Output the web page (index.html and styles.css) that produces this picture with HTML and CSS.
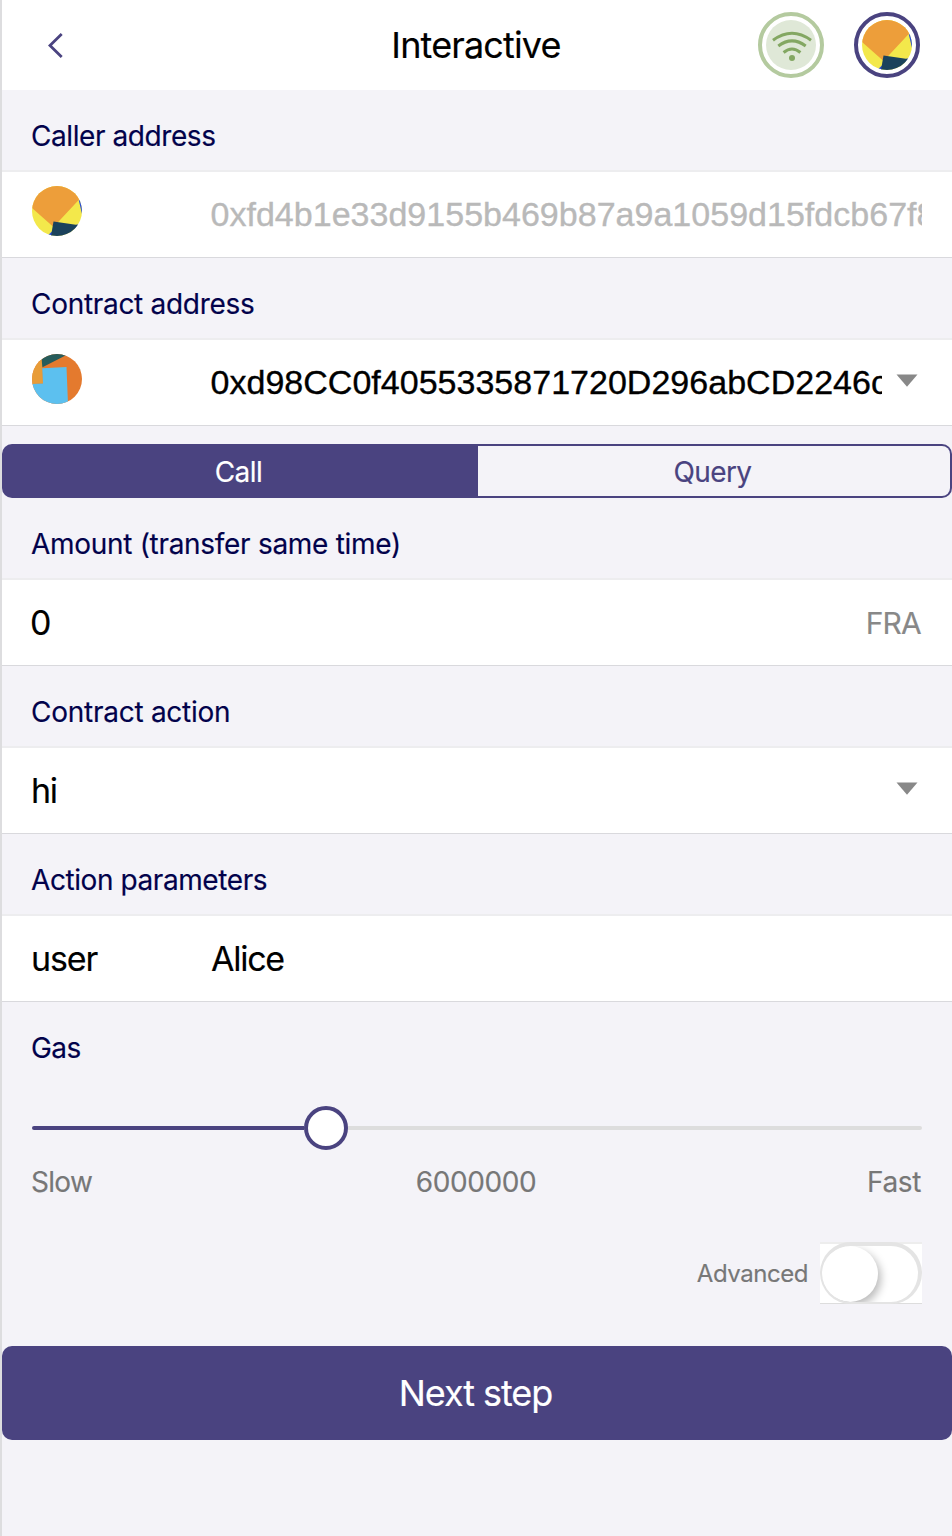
FILE: index.html
```html
<!DOCTYPE html>
<html lang="en">
<head>
<meta charset="utf-8">
<title>Interactive</title>
<link rel="stylesheet" href="styles.css">
</head>
<body>
<svg class="defs" width="0" height="0">
  <symbol id="caller" viewBox="0 0 50 50">
    <path fill="#f3e84b" d="M0 0h50v50H0z"/>
    <path fill="#2b4fd8" d="M46.700 14 50 12v16zM15 50l5-4.500v4.500zM44 38.700l6-1V44l-8 3z"/>
    <path fill="#f3e84b" d="M45.500 39 50 36v2z"/>
    <path fill="#ed9e3a" d="M0 0h50v12l-3.300 2L21.500 41 0 22z"/>
    <path fill="#1b425c" d="m21.500 35.500 24 3.500L40 50H19z"/>
  </symbol>
  <symbol id="contract" viewBox="0 0 50 50">
    <path fill="#e47a2e" d="M0 0h50v50H0z"/>
    <path fill="#275c5b" d="M9 0h25v1.200L10 13.500zM45 8l5 3v8z"/>
    <path fill="#e89c38" d="M0 0h9l1.500 14.500.500 15L0 30z"/>
    <path fill="#5cc0ef" d="m10.200 14.200 24.300-1.100L36 50H0V30l11-.4z"/>
  </symbol>
</svg>
<main class="app">
  <header class="bar">
    <svg class="back" viewBox="0 0 18 28"><path d="M14.700 2 3 13.500l11.700 11.500"/></svg>
    <h1 class="title">Interactive</h1>
    <div class="ring ring-net">
      <svg viewBox="0 0 50 50">
        <circle cx="25" cy="25" r="25" fill="#dfe8d7"/>
        <g fill="none" stroke="#83a762" stroke-width="3">
          <path d="M7 20.200Q26 6.200 45 20.200"/>
          <path d="M12.300 26Q26 15.800 39.700 26"/>
          <path d="M17.600 32.500Q26 25.500 34.400 32.500"/>
        </g>
        <circle cx="26" cy="38" r="3" fill="#83a762"/>
      </svg>
    </div>
    <div class="ring ring-user"><svg class="round"><use href="#caller"/></svg></div>
  </header>

  <h2 class="label l-caller">Caller address</h2>
  <div class="row">
    <div class="icon"><svg class="round"><use href="#caller"/></svg></div>
    <div class="address muted">0xfd4b1e33d9155b469b87a9a1059d15fdcb67f8</div>
  </div>
  <h2 class="label">Contract address</h2>
  <div class="row">
    <div class="icon"><svg class="round"><use href="#contract"/></svg></div>
    <div class="address picked">0xd98CC0f4055335871720D296abCD2246c</div>
    <svg class="caret" viewBox="0 0 22 13"><path d="M.5.500h21L11 12.700z"/></svg>
  </div>

  <div class="tabs">
    <div class="tab active">Call</div>
    <div class="tab query">Query</div>
  </div>

  <h2 class="label">Amount (transfer same time)</h2>
  <div class="row">
    <div class="value zero">0</div>
    <div class="unit">FRA</div>
  </div>
  <h2 class="label l-action">Contract action</h2>
  <div class="row">
    <div class="value">hi</div>
    <svg class="caret" viewBox="0 0 22 13"><path d="M.5.500h21L11 12.700z"/></svg>
  </div>
  <h2 class="label l-params">Action parameters</h2>
  <div class="row">
    <div class="key">user</div>
    <div class="value">Alice</div>
  </div>

  <h2 class="label l-gas">Gas</h2>
  <div class="slider">
    <div class="fill"></div>
    <div class="thumb"></div>
    <div class="track"></div>
  </div>
  <div class="scale">
    <span class="slow">Slow</span><span class="gas">6000000</span><span class="fast">Fast</span>
  </div>
  <div class="advanced">
    <span class="adv-text">Advanced</span>
    <div class="switch"><div class="pill"><div class="knob"></div></div></div>
  </div>
  <div class="next"><span>Next step</span></div>
</main>
</body>
</html>
```
FILE: styles.css
```css
* { box-sizing: border-box; }
body { margin: 0; background: #f4f3f8; font-family: Inter, sans-serif; color: #000; -webkit-text-stroke: 0.15px currentColor; }
.defs { display: block; }
.app { width: 952px; height: 1536px; border-left: 2px solid #dddddf; overflow: hidden; }
svg { display: block; flex: none; }

.bar { display: grid; grid-template-columns: 303px 1fr 305px; height: 90px; background: #fff; align-items: center; position: relative; }
.back { width: 18px; height: 28px; margin-left: 45px; fill: none; stroke: #4a4380; stroke-width: 2.8; }
.title { margin: 0; font-size: 36px; font-weight: 400; line-height: 91px; text-align: center; white-space: nowrap; letter-spacing: -0.85px; }
.ring { position: absolute; top: 12px; width: 66px; height: 66px; padding: 4px; border: 4px solid; border-radius: 50%; }
.ring svg { width: 50px; height: 50px; }
.ring-net { left: 756px; border-color: #b4ca9f; }
.ring-user { left: 852px; border-color: #4a4380; }
.round { width: 50px; height: 50px; border-radius: 50%; }

.label { margin: 0; height: 80px; padding: 12px 0 0 29px; line-height: 69px; font-size: 28px; font-weight: 400; color: #02024b; white-space: nowrap; letter-spacing: -0.3px; }
.l-caller, .l-params { letter-spacing: -0.42px; }
.l-action { letter-spacing: -0.26px; }
.l-gas { letter-spacing: -0.6px; }
.row { display: flex; align-items: center; height: 88px; padding: 0 30px 0 29px; background: #fff; border-top: 2px solid #ededef; border-bottom: 1px solid #d9d9dd; }
.icon { width: 179.500px; padding: 0 0 7px 1px; flex: none; }
.address { flex: 1; min-width: 0; overflow: hidden; white-space: nowrap; font: 34px/84px "Liberation Sans", Arial, sans-serif; height: 85px; letter-spacing: 0.02px; -webkit-text-stroke-width: 0.35px; }
.muted { color: #b9b9b9; }
.picked { margin-right: 14px; }
.caret { width: 22px; height: 13px; margin: 0 4px 4px 0; fill: #888; }
.value { flex: 1; font-size: 34px; letter-spacing: -1.25px; }
.zero { margin-left: -1px; }
.key { width: 180px; font-size: 34px; letter-spacing: -1.1px; }
.unit { font-size: 30px; color: #888; padding-top: 1px; margin-right: 1px; letter-spacing: -0.8px; }

.tabs { display: flex; height: 54px; margin-top: 18px; }
.tab { flex: none; text-align: center; font-size: 28px; line-height: 56px; }
.active { width: 476px; border-radius: 10px 0 0 10px; background: #4a4380; color: #fff; letter-spacing: -0.5px; padding-right: 3px; }
.query { width: 474px; border: 2px solid #4a4380; border-left: 0; border-radius: 0 10px 10px 0; color: #4a4380; line-height: 52px; letter-spacing: -0.65px; padding-right: 3px; }

.slider { display: flex; align-items: center; height: 44px; margin: 24px 30px 0; }
.fill { width: 272px; height: 4px; border-radius: 2px 0 0 2px; background: #4a4380; }
.thumb { width: 44px; height: 44px; border: 4px solid #4a4380; border-radius: 50%; background: #fff; }
.track { flex: 1; height: 4px; border-radius: 0 2px 2px 0; background: #ddd; }
.scale { display: grid; grid-template-columns: 1fr 1fr 1fr; height: 64px; padding: 0 31px 0 29px; line-height: 65px; font-size: 28px; color: #777; letter-spacing: -0.4px; }
.slow { letter-spacing: -0.7px; }
.gas { text-align: center; }
.fast { text-align: right; }
.advanced { display: flex; justify-content: flex-end; align-items: center; gap: 12px; height: 62px; margin: 28px 30px 0 0; font-size: 24px; color: #777; letter-spacing: -0.45px; }
.switch { width: 102px; height: 62px; background: #fff; border-top: 2px solid #ededed; border-bottom: 1px solid #ddd; }
.pill { width: 102px; height: 62px; margin-top: -2px; border: solid #e4e4e4; border-width: 4px 4px 2px 2px; border-radius: 31px; overflow: hidden; }
.knob { width: 56px; height: 56px; border-radius: 50%; background: #fff; box-shadow: 3px 4px 9px rgba(0,0,0,.27); }
.next { height: 94px; margin-top: 42px; padding-right: 3px; border-radius: 10px; background: #4a4380; color: #fff; font-size: 36px; line-height: 95px; text-align: center; letter-spacing: -1.05px; }
```
